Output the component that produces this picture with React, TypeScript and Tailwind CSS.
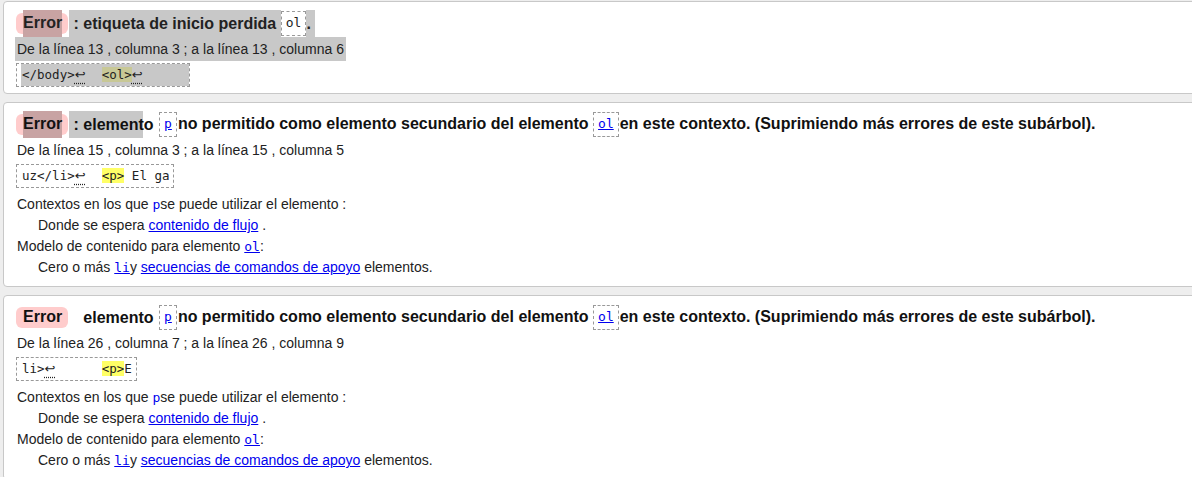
import React from "react";

const sans = "font-['Liberation_Sans',Arial,sans-serif]";
const mono = "font-['DejaVu_Sans_Mono',monospace]";

function Pill({ sel }: { sel?: boolean }) {
  return (
    <span className="flex h-[21px] shrink-0 items-center rounded-[6px] bg-[#fcc] pl-[7px] pr-[6px]">
      <span className={`flex h-[27px] items-center ${sel ? "bg-[#c8a3a3]" : ""}`}>Error</span>
    </span>
  );
}

function TCode({ children, link }: { children: React.ReactNode; link?: boolean }) {
  return (
    <span
      className={`${mono} flex h-[25px] shrink-0 items-center border border-dashed border-[#999] bg-white px-[4px] text-[13px] font-normal ${
        link ? "text-[#00e] underline" : "text-[#222]"
      }`}
    >
      {children}
    </span>
  );
}

function Ret() {
  return (
    <span className="inline-block w-[12px] font-['DejaVu_Sans',sans-serif] text-[13px] underline decoration-dotted underline-offset-[4px]">
      ↩
    </span>
  );
}

function Snip({ children }: { children: React.ReactNode }) {
  return (
    <div
      className={`${mono} mt-[2px] flex h-[24px] w-fit items-stretch whitespace-pre border border-dashed border-[#999] pl-[4px] pr-[4px] text-[12.5px] text-[#222]`}
    >
      {children}
    </div>
  );
}

function Hl({ children, olive }: { children: React.ReactNode; olive?: boolean }) {
  return <span className={olive ? "bg-[#c8c896]" : "bg-[#ffff66]"}>{children}</span>;
}

function Where({ line1, col1, line2, col2, sel }: { line1: number; col1: number; line2: number; col2: number; sel?: boolean }) {
  return (
    <div
      className={`-ml-px h-[24px] w-fit pl-[2px] pr-[2px] text-[14px] leading-[24px] text-[#222] ${sel ? "bg-[#c8c8c8]" : ""}`}
    >
      De la línea {line1} , columna {col1} ; a la línea {line2} , columna {col2}
    </div>
  );
}

function Details() {
  const a = "text-[#00e] underline";
  return (
    <div className="mt-[6px] text-[14px] leading-[21px] text-[#222]">
      <div className="h-[21px] whitespace-pre pl-px">
        Contextos en los que <span className={`${mono} text-[13px] text-[#00e]`}>p</span>se puede utilizar el elemento :
      </div>
      <div className="h-[21px] whitespace-pre pl-[22px]">
        Donde se espera <span className={a}>contenido de flujo</span> .
      </div>
      <div className="h-[21px] whitespace-pre pl-px">
        Modelo de contenido para elemento <span className={`${mono} text-[13px] ${a}`}>ol</span>:
      </div>
      <div className="h-[22px] whitespace-pre pl-[22px]">
        Cero o más <span className={`${mono} text-[13px] ${a}`}>li</span>y{" "}
        <span className={a}>secuencias de comandos de apoyo</span> elementos.
      </div>
    </div>
  );
}

function Card({ children, last }: { children: React.ReactNode; last?: boolean }) {
  return (
    <div className={`-mr-4 rounded-[4px] border border-[#c8c8c8] bg-white pl-[12px] pt-[7px] ${last ? "" : "mb-2"}`}>
      {children}
    </div>
  );
}

function NotAllowed({ sel }: { sel?: boolean }) {
  return (
    <div className="flex h-[28px] items-center whitespace-pre text-[16px] font-bold text-[#111]">
      <Pill sel={sel} />
      <span
        className={`ml-px inline-block h-[27px] leading-[27px] ${
          sel ? "bg-[linear-gradient(to_right,#c8c8c8_74px,transparent_74px)]" : ""
        }`}
      >
        {" "}
        <span className={sel ? "" : "invisible"}>:</span>
        {" elemento "}
      </span>
      <span className="ml-px">
        <TCode link>p</TCode>
      </span>
      <span className="ml-px inline-block">no permitido como elemento secundario del elemento </span>
      <TCode link>ol</TCode>
      <span className="ml-px inline-block">en este contexto. (Suprimiendo más errores de este subárbol).</span>
    </div>
  );
}

export default function App() {
  return (
    <div className={`${sans} min-h-screen overflow-hidden bg-[#eee] pl-[3px] pt-[1px]`}>
      <Card>
        <div className="pb-[6px]">
          <div className="flex h-[28px] items-center whitespace-pre text-[16px] font-bold text-[#222]">
            <Pill sel />
            <span className="ml-px inline-block h-[27px] bg-[#c8c8c8] leading-[27px]">{" : etiqueta de inicio perdida "}</span>
            <TCode>ol</TCode>
            <span className="inline-block h-[27px] bg-[#c8c8c8] leading-[27px]">{". "}</span>
          </div>
          <Where line1={13} col1={3} line2={13} col2={6} sel />
          <Snip>
            <span className="-mr-[4px] block bg-[#c8c8c8] pl-px leading-[22px]">
              {"</body>"}
              <Ret />
              {"  "}
              <Hl olive>{"<ol>"}</Hl>
              <Ret />
              {"      "}
            </span>
          </Snip>
        </div>
      </Card>
      <Card>
        <div className="pb-[7px]">
          <NotAllowed sel />
          <Where line1={15} col1={3} line2={15} col2={5} />
          <Snip>
            <span className="block pl-px leading-[22px]">
              {"uz</li>"}
              <Ret />
              {"  "}
              <Hl>{"<p>"}</Hl>
              {" El ga"}
            </span>
          </Snip>
          <Details />
        </div>
      </Card>
      <Card last>
        <div className="pb-[7px]">
          <NotAllowed />
          <Where line1={26} col1={7} line2={26} col2={9} />
          <Snip>
            <span className="block pl-px leading-[22px]">
              {"li>"}
              <Ret />
              {"      "}
              <Hl>{"<p>"}</Hl>
              {"E"}
            </span>
          </Snip>
          <Details />
        </div>
      </Card>
    </div>
  );
}
